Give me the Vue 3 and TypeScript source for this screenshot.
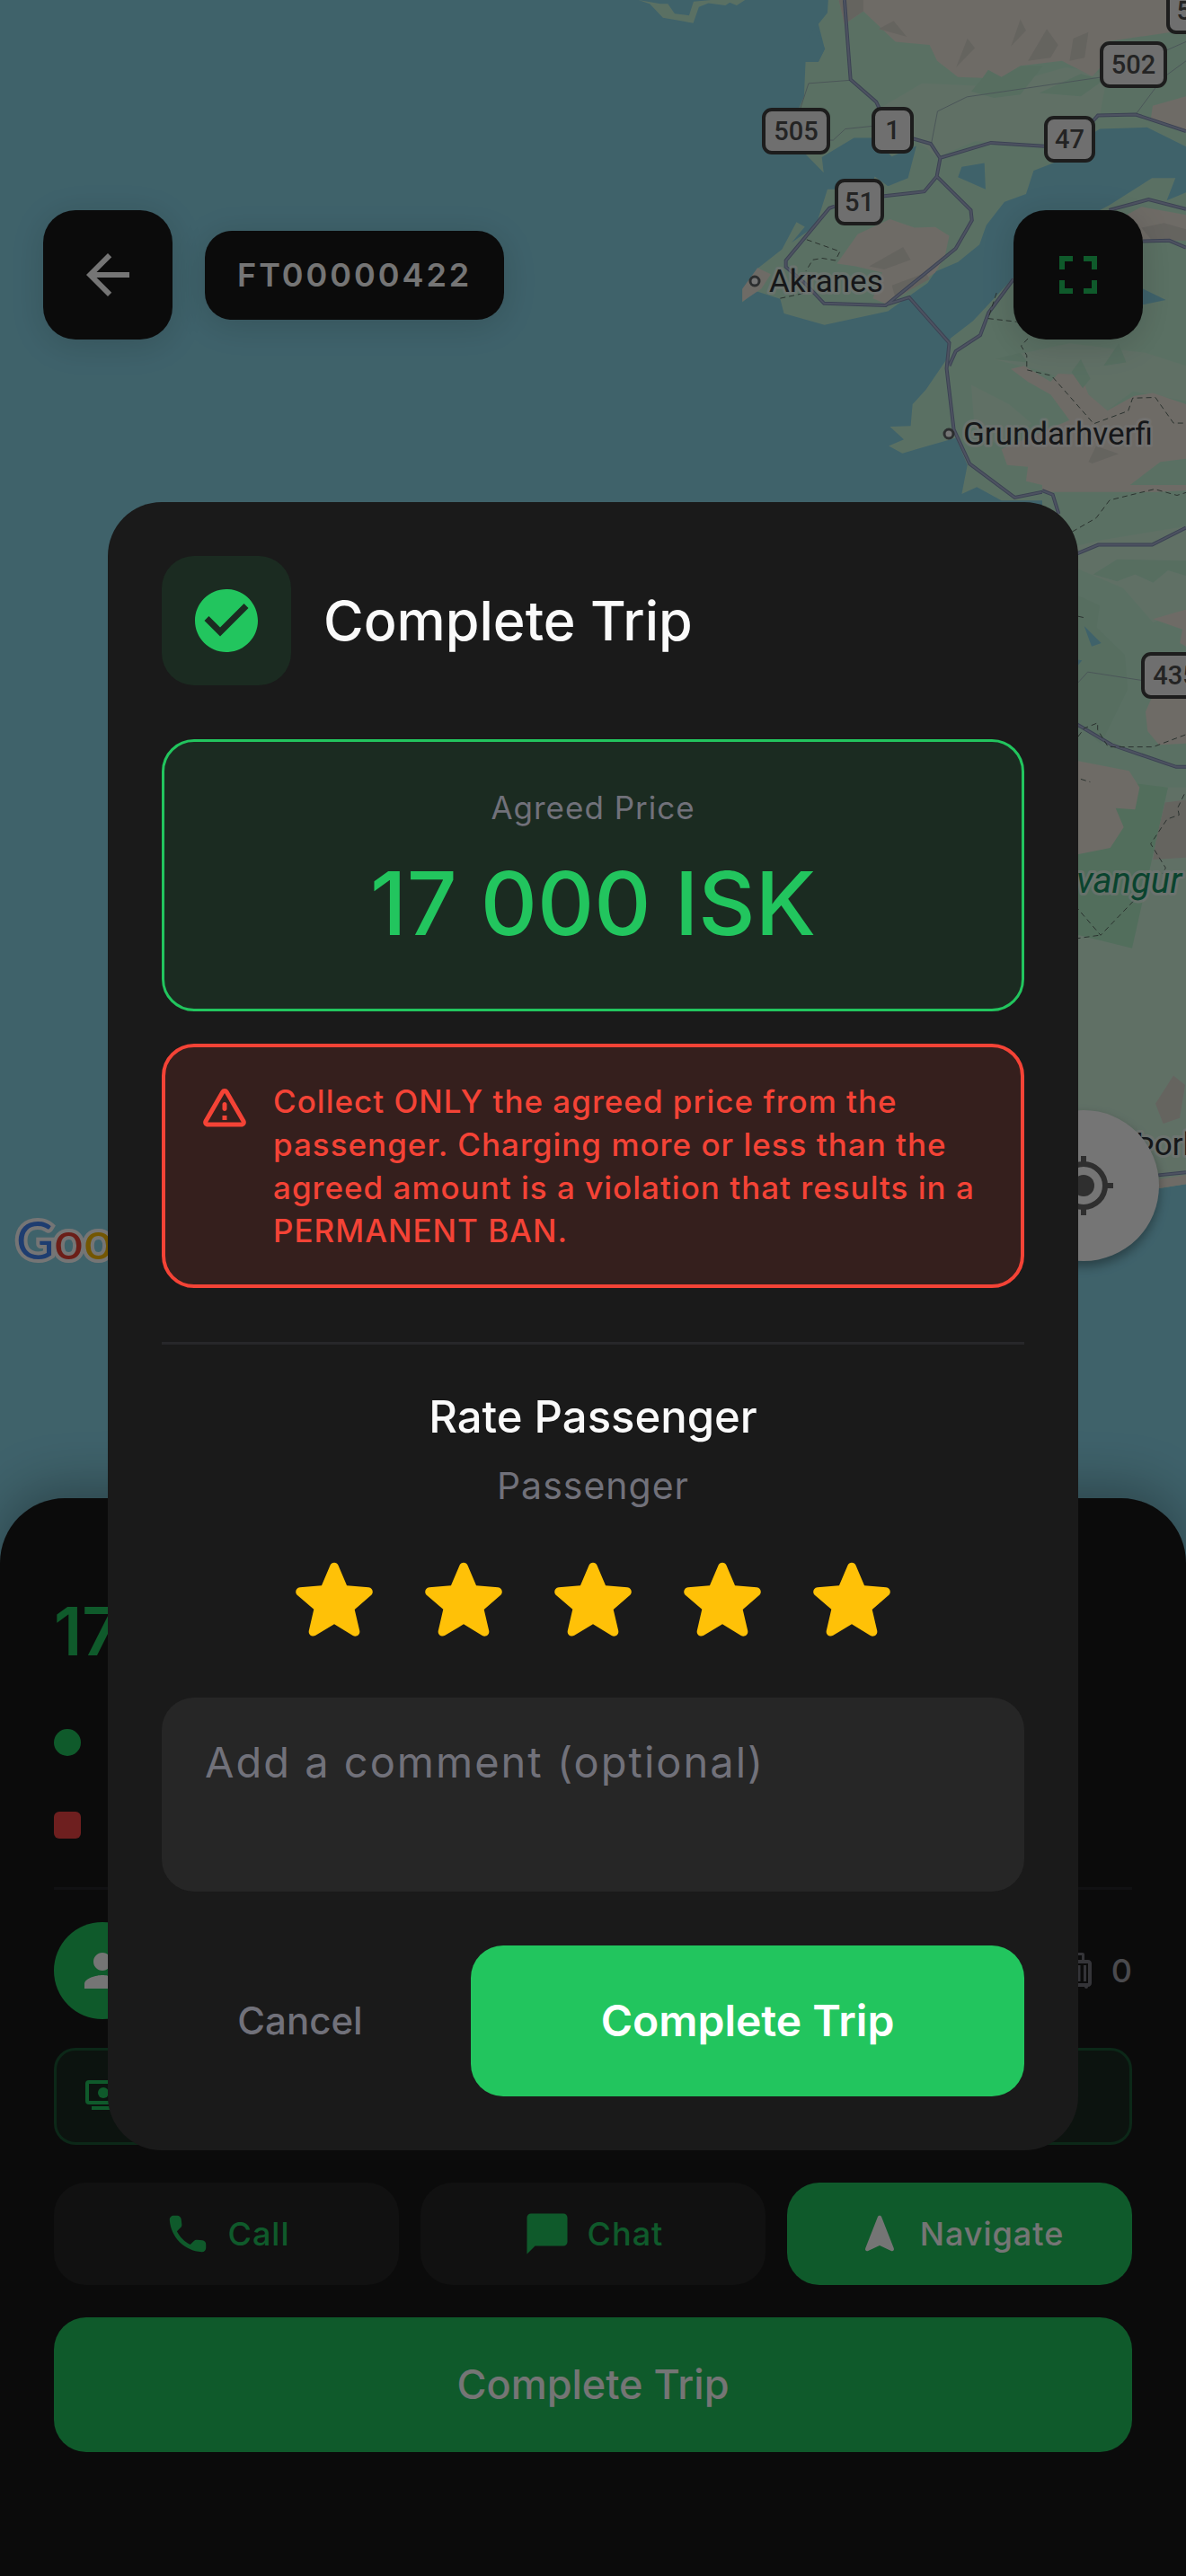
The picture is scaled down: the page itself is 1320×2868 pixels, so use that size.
<script setup lang="ts">
import { ref } from 'vue'

interface Shield {
  label: string
  x: number
  y: number
  width: number
}

const tripId = 'FT00000422'
const price = '17 000 ISK'
const rating = ref(5)
const comment = ref('')

const shields: Shield[] = [
  { label: '505', x: 850, y: 122, width: 72 },
  { label: '1', x: 972, y: 121, width: 43 },
  { label: '51', x: 931, y: 201, width: 51 },
  { label: '47', x: 1164, y: 131, width: 53 },
  { label: '502', x: 1226, y: 48, width: 71 },
  { label: '50', x: 1300, y: -12, width: 52 },
  { label: '435', x: 1272, y: 728, width: 72 },
]
</script>

<template>
  <main class="screen">
    <svg class="map" viewBox="0 0 1320 1740" preserveAspectRatio="xMidYMin slice" aria-hidden="true">
      <!-- northern coast -->
      <g transform="translate(660 0) scale(.42092 .35714)">
        <path class="land" d="M120 0l30 12 35 43 80 17 15-50 25-12 45 7 22-17h-60l-46 5-12 43-38-5-18-31h-20zM345 0l35 17 22-17z" />
        <path class="land" d="M622 0l-2 40-24 35 17 78-17 40h-34l-4 107-18 50-20 80 40 48 50 60-5-48 85-60h50l50 58 65-33-22 100-53 25-35-30-10 40h-115l-30 112-65 55 35-50-22-15-38 85-65 60-40 65v40l35-35 65 25 10 45 107 36 168-43 105-88 20-35 60-30 57-55 18-60 48-73 57-24 20-73 55-25 80-75 40-30 125-5 103 60V0z" />
        <path class="water" d="M588 82l-26 50v60h34l17-40z" />
        <path class="land" d="M1568 600l-51 25 23-70h-62l-113 85-65 40-188 185-107 135-60 55-10 65-55 95-35 45-5 68-55 2 37 40-40 20 36 23 142-48 30 85-15 90 40-22 65 42h488z" />
        <path class="water" d="M975 520l60-12 3 82-73-38zM1454 900l61 35-61 15z" />
        <path class="soft" d="M740 350l130-90 200 10 180-60 110 20-20 130-110 90-220-10-100 50-30-30z" />
        <path class="soft" d="M1060 1120l200-50 200 30 108 40v110l-140-30-70 60-100-90-60-30zM1000 1200l100 60 60 60-80 70-70-40z" />
        <path class="green" d="M1030 243l15-25 35 22 50-35 60 0-60 90-70 10-60-20zM1180 290l110-60 60 20-60 50z" />
        <path class="rock" d="M650 0l15 75 50-40 85 95 90 10 20 50 55 50 65 3 15-25 35 22 50-35 110-15 80 48 30-38 5-70 175-30 33-10V0zM645 822l55-92 85-47 65 27 55-2 37 27-12 65-25 50-125 100-40-20 25-80-70-20zM1105 1150l35-10 70 50 20-25 60 3 20 62 50 50 70-45 50-10 88 35v170l-68 10-100 90-135 3-120-33 5-45-55-5-15-50 180-90-50-80-60-40zM1380 690l70-45 118 25v80l-50-10-64 10zM1568 300l-88 30-5 40 93 40zM395 940v-40l40-65 35 20-25 45z" />
        <path class="rock-dark" d="M650 0l15 75 50-40V0zM755 90l40-25 35 50zM1130 60l15 35-40 50zM990 120l-30 90 50-60zM1200 90l30 50-20 40-60 10zM1270 120l40-20-10 80-40 10zM1450 710l60-15 58 20v35h-90zM1310 1440l20-50 60 25-70 30zM730 830l90-60 20 40-70 30zM790 890l90-40 10 20-90 60z" />
        <path class="green" d="M1290 1120l25 60-20 30-30-50zM1390 1070l20 60-60 10zM1060 1120l70-20 20 30z" />
        <path class="road-thin" d="M682 250l-112 10-25 90M620 437h15l32-35 73-9M895 445l16-98 78-45 353-61M1436 355l60-95M1514 158l54-28M1510 240l58-50" />
        <path class="road-edge" d="M665 0l16 248 68 70 20 50M845 432l48 16 25 45-9 57 90 105 3 32-43 88-185 177-163-6-50-62-51-52v-20l115-163 14-6M765 612l111-15 33-47M918 492l134-47 141 11M1320 380l15-20 100-3 133 52M774 950l62-23 106 142-7 80 19 190 42 107 119 105 75-18 25 18 10 25M942 1140l17-45 65-50 22-70 66-105M1365 655l104-33 99 30M1454 752l70-2 44 22" />
        <path class="road" d="M665 0l16 248 68 70 20 50M845 432l48 16 25 45-9 57 90 105 3 32-43 88-185 177-163-6-50-62-51-52v-20l115-163 14-6M765 612l111-15 33-47M918 492l134-47 141 11M1320 380l15-20 100-3 133 52M774 950l62-23 106 142-7 80 19 190 42 107 119 105 75-18 25 18 10 25M942 1140l17-45 65-50 22-70 66-105M1365 655l104-33 99 30M1454 752l70-2 44 22" />
        <path class="border-line" d="M565 747l88 37-12 28-35-7-25 5-18 35M1067 913l-22 80 75 10 40 40-28 35 15 30v45l65 18 112 150 91-40 12-40 60-2 48 80h33M1360 1560l120-35 60 20 28-15M495 930l60-15" />
      </g>

      <!-- eastern shore -->
      <g transform="translate(1160 540) scale(.33333 .76531)">
        <path class="land" d="M0 0h480v1017l-90 6H0z" />
        <path class="soft" d="M0 440h480v577l-90 6H0z" />
        <path class="soft" d="M0 100l200-20 280-20v120l-110 20-100-50z" />
        <path class="green" d="M170 130l80-22 230 2v22l-60-8-50 18-60-12-60 10zM90 155l102 20-10 32 94 40 10 50-90 80-80-30-26-60z" />
        <path class="park" d="M60 420l360 20-120 234-240-26z" />
        <path class="rock" d="M100 400l190 16 35 24-15 32-65-2 27 28-45 30-117 10zM370 195l110-14v54l-20-5 8-20zM345 330l20-20 115-2v68l-90 2-38-20zM0 0h480v8l-100 2H0zM390 1010l90-6v13l-90 6z" />
        <path class="rock-dark" d="M410 462l70-4v84l-110 3 10-28zM378 900l60-41 39 14-18 48-55 8z" />
        <path class="water" d="M140 205l57 25-32 5zM118 254l15 1-15 8z" />
        <path class="road-thin" d="M110 292l42-20 178 12" />
        <path class="road-edge" d="M0 8l35 6 20 28M115 100l72-13h180l113-25M100 344l132 34 215 32h33M388 1004l92-4" />
        <path class="road" d="M0 8l35 6 20 28M115 100l72-13h180l113-25M100 344l132 34 215 32h33M388 1004l92-4" />
        <path class="border-line" d="M100 68l80-20 45-26 150-16 75 9 30-4M120 191l20 2M120 366l20-12 45-8v10l35 25h150l110-18M100 424l60 8M474 450l-22 20 5 10-40 6-55 36 50 35-10 8M110 612l85 43 110-50M110 660l80-5" />
      </g>

      <g v-for="shield in shields" :key="shield.label" class="shield">
        <rect :x="shield.x" :y="shield.y" :width="shield.width" height="48" rx="9" />
        <text :x="shield.x + shield.width / 2" :y="shield.y + 34">{{ shield.label }}</text>
      </g>

      <g class="town">
        <circle cx="840" cy="313" r="5" />
        <text x="856" y="325">Akranes</text>
        <circle cx="1056" cy="483" r="5" />
        <text x="1072" y="495">Grundarhverfi</text>
        <text x="1264" y="1286">Þorl</text>
      </g>
      <text class="park-name" x="1198" y="994">vangur</text>
    </svg>

    <section class="map-controls">
      <header class="top-bar">
        <button class="square-button back" type="button" aria-label="Back">
          <svg class="icon-72" viewBox="0 0 24 24"><path d="M20 11H7.83l5.59-5.59L12 4l-8 8 8 8 1.41-1.41L7.83 13H20v-2z" /></svg>
        </button>
        <span class="trip-id">{{ tripId }}</span>
        <button class="square-button fullscreen" type="button" aria-label="Full screen">
          <svg class="icon-72" viewBox="0 0 24 24"><path d="M7 14H5v5h5v-2H7v-3zm-2-4h2V7h3V5H5v5zm12 7h-3v2h5v-5h-2v3zM14 5v2h3v3h2V5h-5z" /></svg>
        </button>
      </header>
      <footer class="map-footer">
        <span class="attribution"><i class="blue">G</i><i class="red">o</i><i class="yellow">o</i><i class="blue">g</i></span>
        <button class="locate" type="button" aria-label="My location">
          <svg viewBox="0 0 66 66">
            <circle cx="33" cy="33" r="24" fill="none" stroke="currentColor" stroke-width="6" />
            <circle cx="33" cy="33" r="12" />
            <path d="M30 0h6v9h-6zM30 57h6v9h-6zM0 30h9v6H0zM57 30h9v6h-9z" />
          </svg>
        </button>
      </footer>
    </section>

    <section class="sheet">
      <strong class="sheet-price">{{ price }}</strong>
      <div class="stops">
        <span class="stop pickup"></span>
        <span class="stop dropoff"></span>
      </div>
      <hr class="sheet-rule" />
      <div class="rider">
        <span class="avatar">
          <svg viewBox="0 0 24 24"><path d="M12 12c2.21 0 4-1.79 4-4s-1.79-4-4-4-4 1.79-4 4 1.79 4 4 4zm0 2c-2.67 0-8 1.34-8 4v2h16v-2c0-2.66-5.33-4-8-4z" /></svg>
        </span>
        <span class="bags">
          <svg viewBox="0 0 24 24"><path fill-rule="evenodd" d="M17 6h-2V3c0-.55-.45-1-1-1h-4c-.55 0-1 .45-1 1v3H7c-1.1 0-2 .9-2 2v11c0 1.1.9 2 2 2 0 .55.45 1 1 1s1-.45 1-1h6c0 .55.45 1 1 1s1-.45 1-1c1.1 0 2-.9 2-2V8c0-1.1-.9-2-2-2zM10.5 3.5h3V6h-3V3.5zM17 19H7V8h10v11zM8 9h1.5v9H8zM14.5 9H16v9h-1.5zM11.25 9h1.5v9h-1.5z" /></svg>
          <span>0</span>
        </span>
      </div>
      <div class="payment">
        <svg viewBox="0 0 48 48">
          <rect x="7" y="8" width="36" height="23" rx="2" fill="none" stroke="currentColor" stroke-width="4" />
          <circle cx="25" cy="20" r="6" />
          <path d="M12 35h26v4H12z" />
        </svg>
      </div>
      <div class="actions">
        <button class="action" type="button">
          <svg class="icon-54" viewBox="0 0 24 24"><path d="M19.23 15.26l-2.54-.29c-.61-.07-1.21.14-1.64.57l-1.84 1.84c-2.83-1.44-5.15-3.75-6.59-6.59l1.85-1.85c.43-.43.64-1.03.57-1.64l-.29-2.52c-.12-1.01-.97-1.77-1.99-1.77H5.03c-1.13 0-2.07.94-2 2.07.53 8.54 7.36 15.36 15.89 15.89 1.13.07 2.07-.87 2.07-2v-1.73c.01-1.01-.75-1.86-1.76-1.98z" /></svg>
          Call
        </button>
        <button class="action" type="button">
          <svg class="icon-54" viewBox="0 0 24 24"><path d="M20 2H4c-1.1 0-1.99.9-1.99 2L2 22l4-4h14c1.1 0 2-.9 2-2V4c0-1.1-.9-2-2-2z" /></svg>
          Chat
        </button>
        <button class="action primary" type="button">
          <svg class="icon-54" viewBox="0 0 24 24"><path d="M12.9 3.6L19 19.1c.4 1-.4 1.7-1.3 1.3L12 17.8l-5.7 2.6c-.9.4-1.7-.3-1.3-1.3l6.1-15.5c.35-.85 1.45-.85 1.8 0z" /></svg>
          Navigate
        </button>
      </div>
      <button class="finish" type="button">Complete Trip</button>
    </section>

    <div class="scrim">
      <form class="dialog" role="dialog" aria-labelledby="dialog-title" @submit.prevent>
        <header class="dialog-header">
          <span class="badge">
            <svg viewBox="0 0 24 24"><path d="M12 2C6.48 2 2 6.48 2 12s4.48 10 10 10 10-4.48 10-10S17.52 2 12 2zm-2 15l-5-5 1.41-1.41L10 14.17l7.59-7.59L19 8l-9 9z" /></svg>
          </span>
          <h1 id="dialog-title">Complete Trip</h1>
        </header>

        <div class="price-card">
          <span class="price-label">Agreed Price</span>
          <span class="price-value">{{ price }}</span>
        </div>

        <div class="warning">
          <svg viewBox="0 0 24 24"><path d="M12 5.99L19.53 19H4.47L12 5.99M2.74 18c-.77 1.33.19 3 1.73 3h15.06c1.54 0 2.5-1.67 1.73-3L13.73 4.99c-.77-1.33-2.69-1.33-3.46 0L2.74 18zM11 11v2c0 .55.45 1 1 1s1-.45 1-1v-2c0-.55-.45-1-1-1s-1 .45-1 1zm0 5h2v2h-2z" /></svg>
          <p>Collect ONLY the agreed price from the passenger. Charging more or less than the agreed amount is a violation that results in a PERMANENT BAN.</p>
        </div>

        <hr class="rule" />

        <h2>Rate Passenger</h2>
        <p class="passenger">Passenger</p>
        <div class="stars">
          <button v-for="n in 5" :key="n" class="star" :class="{ on: n <= rating }" type="button" :aria-label="`Rate ${n}`" @click="rating = n">
            <svg viewBox="0 0 24 24"><path d="M12 17.27l4.15 2.51c.76.46 1.69-.22 1.49-1.08l-1.1-4.72 3.67-3.18c.67-.58.31-1.68-.57-1.75l-4.83-.41-1.89-4.46c-.34-.81-1.5-.81-1.84 0L9.19 8.63l-4.83.41c-.88.07-1.24 1.17-.57 1.75l3.67 3.18-1.1 4.72c-.2.86.73 1.54 1.49 1.08l4.15-2.5z" /></svg>
          </button>
        </div>

        <textarea v-model="comment" class="comment" rows="2" placeholder="Add a comment (optional)" aria-label="Add a comment (optional)"></textarea>

        <div class="dialog-actions">
          <button class="cancel" type="button">Cancel</button>
          <button class="confirm" type="submit">Complete Trip</button>
        </div>
      </form>
    </div>
  </main>
</template>

<style>
body {
  margin: 0;
  background: #0c0c0c;
}
</style>

<style scoped>
* {
  box-sizing: border-box;
}

.screen {
  --green: #22c55e;
  --surface: #1a1a1a;
  --raised: #262626;
  --muted: #71717a;
  position: relative;
  display: flex;
  flex-direction: column;
  min-height: 100vh;
  overflow: hidden;
  background: #89d5e8;
  font-family: Inter, "Liberation Sans", sans-serif;
  font-size: 36px;
  line-height: 48px;
}

button {
  margin: 0;
  padding: 0;
  border: 0;
  background: none;
  color: inherit;
  font: inherit;
  cursor: pointer;
}

svg {
  display: block;
  flex: none;
  fill: currentColor;
}

h1,
h2,
p,
hr {
  margin: 0;
}

hr {
  height: 3px;
  border: 0;
  background: #27272a;
}

.icon-72 {
  width: 72px;
  height: 72px;
}

.icon-54 {
  width: 54px;
  height: 54px;
}

/* Map */
.map {
  position: absolute;
  top: 0;
  left: 0;
  width: 100%;
}

.water {
  fill: #89d5e8;
}

.land {
  fill: #c5f4d8;
}

.soft {
  fill: #d1f3dd;
}

.green {
  fill: #bdefd2;
}

.park {
  fill: #b3efc9;
}

.rock {
  fill: #f0e9de;
}

.rock-dark {
  fill: #ddd9d0;
}

.road,
.road-edge,
.road-thin,
.border-line {
  fill: none;
  vector-effect: non-scaling-stroke;
}

.road {
  stroke: #a9b4d4;
  stroke-width: 2px;
}

.road-edge {
  stroke: #8190b4;
  stroke-width: 4px;
}

.road-thin {
  stroke: #a3bcc0;
  stroke-width: 1px;
}

.border-line {
  stroke: #5d6e66;
  stroke-width: 1px;
  stroke-dasharray: 6 4;
}

.shield rect {
  fill: #f2f2f2;
  stroke: #404040;
  stroke-width: 4px;
}

.shield text {
  fill: #505050;
  font-family: Roboto, sans-serif;
  font-size: 29px;
  font-weight: 500;
  text-anchor: middle;
}

.town circle {
  fill: #fff;
  stroke: #606468;
  stroke-width: 3px;
}

.town text,
.park-name {
  fill: #303438;
  stroke: rgba(255, 255, 255, 0.6);
  stroke-width: 6px;
  stroke-linejoin: round;
  paint-order: stroke;
  font-family: Roboto, sans-serif;
  font-size: 35px;
}

.park-name {
  fill: #169264;
  font-size: 40px;
  font-style: italic;
}

.map-controls {
  position: relative;
  display: flex;
  flex: 1;
  flex-direction: column;
  justify-content: space-between;
}

.top-bar {
  display: flex;
  align-items: center;
  gap: 36px;
  padding: 234px 48px 0;
}

.square-button {
  display: grid;
  width: 144px;
  height: 144px;
  place-items: center;
  border-radius: 36px;
  background: var(--surface);
  box-shadow: 0 6px 36px rgba(0, 0, 0, 0.15);
}

.back {
  color: #fff;
}

.fullscreen {
  margin-left: auto;
  color: var(--green);
}

.trip-id {
  padding: 24px 36px;
  border-radius: 30px;
  background: var(--surface);
  box-shadow: 0 6px 36px rgba(0, 0, 0, 0.15);
  color: #fff;
  font-weight: 600;
  line-height: 51px;
  letter-spacing: 3px;
}

.map-footer {
  display: flex;
  align-items: center;
  justify-content: space-between;
  padding: 0 30px 264px 18px;
}

.attribution {
  align-self: flex-end;
  font-family: Lato, sans-serif;
  font-size: 58px;
  line-height: 48px;
  -webkit-text-stroke: 8px #fff;
  paint-order: stroke;
}

.attribution i {
  font-style: normal;
}

.blue {
  color: #4285f4;
}

.red {
  color: #ea4335;
}

.yellow {
  color: #fbbc05;
}

.locate {
  display: grid;
  width: 168px;
  height: 168px;
  place-items: center;
  border-radius: 50%;
  background: #fff;
  box-shadow: 0 6px 12px rgba(0, 0, 0, 0.35);
  color: #666;
}

.locate svg {
  width: 66px;
  height: 66px;
}

/* Trip sheet */
.sheet {
  position: relative;
  display: flex;
  flex-direction: column;
  padding: 100px 60px 138px;
  border-radius: 72px 72px 0 0;
  background: var(--surface);
  box-shadow: 0 -12px 60px rgba(0, 0, 0, 0.3);
}

.sheet-price {
  color: var(--green);
  font-size: 74px;
  font-weight: 600;
  line-height: 96px;
}

.stops {
  display: flex;
  flex-direction: column;
  gap: 62px;
  margin: 61px 0 54px;
}

.stop {
  width: 30px;
  height: 30px;
}

.pickup {
  border-radius: 50%;
  background: var(--green);
}

.dropoff {
  border-radius: 6px;
  background: #ef4444;
}

.rider {
  display: flex;
  align-items: center;
  justify-content: space-between;
  margin: 36px 0 32px;
}

.avatar {
  display: grid;
  width: 108px;
  height: 108px;
  place-items: center;
  border-radius: 50%;
  background: var(--green);
  color: #fff;
}

.avatar svg {
  width: 60px;
  height: 60px;
}

.bags {
  display: flex;
  align-items: center;
  gap: 12px;
  color: var(--muted);
}

.bags svg {
  width: 48px;
  height: 48px;
}

.bags span {
  color: #a1a1aa;
  font-weight: 500;
}

.payment {
  display: flex;
  align-items: center;
  height: 108px;
  padding: 0 27px;
  border: 3px solid #1c5735;
  border-radius: 24px;
  background: #1b2b21;
  color: var(--green);
}

.payment svg {
  width: 48px;
  height: 48px;
}

.actions {
  display: grid;
  grid-template-columns: repeat(3, 1fr);
  gap: 24px;
  margin: 42px 0 36px;
}

.action {
  display: flex;
  align-items: center;
  justify-content: center;
  gap: 18px;
  height: 114px;
  border-radius: 36px;
  background: var(--raised);
  color: var(--green);
  font-weight: 500;
  letter-spacing: 1px;
}

.action.primary {
  background: var(--green);
  color: #fff;
}

.finish {
  height: 150px;
  border-radius: 36px;
  background: var(--green);
  color: #fff;
  font-size: 45px;
  font-weight: 500;
}

/* Dialog */
.scrim {
  position: absolute;
  inset: 0;
  display: flex;
  align-items: center;
  padding: 186px 120px 102px;
  background: rgba(0, 0, 0, 0.54);
}

.dialog {
  display: flex;
  flex: 1;
  flex-direction: column;
  padding: 60px;
  border-radius: 60px;
  background: var(--surface);
}

.dialog-header {
  display: flex;
  align-items: center;
  gap: 36px;
  margin-bottom: 60px;
}

.badge {
  display: grid;
  width: 144px;
  height: 144px;
  place-items: center;
  border-radius: 36px;
  background: #1b2b21;
  color: var(--green);
}

.badge svg {
  width: 84px;
  height: 84px;
}

h1 {
  color: #fafafa;
  font-size: 61px;
  font-weight: 500;
  line-height: 84px;
}

.price-card {
  display: flex;
  flex-direction: column;
  gap: 12px;
  align-items: center;
  padding: 48px;
  border: 3px solid var(--green);
  border-radius: 36px;
  background: #1b2b21;
}

.price-label {
  color: var(--muted);
  font-size: 35px;
  line-height: 51px;
  letter-spacing: 1px;
}

.price-value {
  color: var(--green);
  font-size: 98px;
  font-weight: 500;
  line-height: 138px;
}

.warning {
  display: flex;
  gap: 24px;
  margin: 36px 0 60px;
  padding: 36px;
  border: 4px solid #f44336;
  border-radius: 36px;
  background: #351f1d;
  color: #f44336;
}

.warning svg {
  width: 60px;
  height: 60px;
}

.warning p {
  font-size: 35px;
  font-weight: 500;
  letter-spacing: 1px;
}

h2 {
  margin-top: 48px;
  color: #fafafa;
  font-size: 49px;
  font-weight: 500;
  line-height: 66px;
  text-align: center;
}

.passenger {
  margin: 12px 0 36px;
  color: var(--muted);
  font-size: 41px;
  line-height: 63px;
  text-align: center;
  letter-spacing: 1px;
}

.stars {
  display: flex;
  gap: 24px;
  justify-content: center;
}

.star {
  width: 120px;
  height: 120px;
  color: var(--muted);
}

.star.on {
  color: #ffc107;
}

.comment {
  width: 100%;
  height: 216px;
  margin: 48px 0 60px;
  padding: 36px 48px;
  border: 0;
  border-radius: 36px;
  outline: 0;
  background: var(--raised);
  color: #fafafa;
  font: inherit;
  font-size: 47px;
  line-height: 72px;
  letter-spacing: 2px;
  resize: none;
}

.comment::placeholder {
  color: var(--muted);
  opacity: 1;
}

.dialog-actions {
  display: grid;
  grid-template-columns: 1fr 2fr;
  gap: 36px;
}

.cancel,
.confirm {
  height: 168px;
  border-radius: 36px;
}

.cancel {
  color: var(--muted);
  font-size: 42px;
  font-weight: 500;
}

.confirm {
  background: var(--green);
  color: #fff;
  font-size: 48px;
  font-weight: 600;
}
</style>
